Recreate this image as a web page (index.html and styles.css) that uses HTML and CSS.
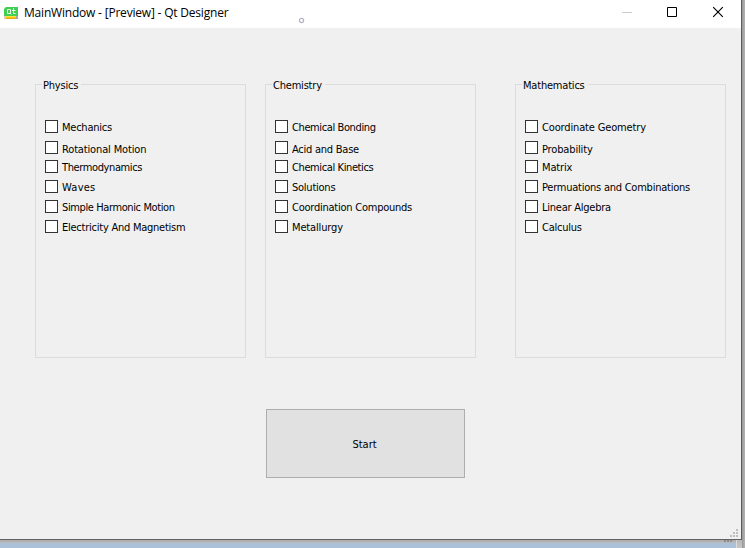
FILE: index.html
```
<!DOCTYPE html>
<html lang="en">
<head>
<meta charset="utf-8">
<title>MainWindow - [Preview] - Qt Designer</title>
<link rel="stylesheet" href="styles.css">
</head>
<body>
<div class="desktop">
  <div class="window">
    <header class="titlebar">
      <svg class="logo" width="16" height="16" viewBox="0 0 16 16">
        <path d="M3 2h12v9l-2 1H1V4z" fill="#41cd52"/>
        <path d="M1 11h2v3H1z" fill="#d8d0c0"/>
        <path d="M3 11h10v1H3z" fill="#f7e04a"/>
        <path d="M3 12h10v1H3z" fill="#f6c800"/>
        <path d="M3 13h10v1H3z" fill="#e5a914"/>
        <path d="M13 11h2v3h-2z" fill="#b0a59c"/>
        <path d="M4.5 4.5h3v4h-3zM7 8l1.5 1.5M10.5 3v5.5h2M9 5.5h3.5" fill="none" stroke="#e6fae9" stroke-width="1"/>
      </svg>
      <h1 class="title">MainWindow - [Preview] - Qt Designer</h1>
      <svg class="cursor" width="7" height="7" viewBox="0 0 7 7"><circle cx="3.5" cy="3.5" r="2.1" fill="#fff" stroke="#b4b4c8" stroke-width="1.3"/></svg>
      <svg class="controls" width="104" height="28" viewBox="0 0 104 28">
        <path d="M1 12.5h10" stroke="#ccc" fill="none"/>
        <path d="M46.5 7.5h9v9h-9z" stroke="#000" fill="none"/>
        <path d="M92.2 7.2l9.6 9.6M101.8 7.2l-9.6 9.6" stroke="#000" stroke-width="1.15" fill="none"/>
      </svg>
    </header>
    <main class="content">
      <div class="groups">
        <section class="group">
          <h2 class="legend">Physics</h2>
          <label class="option"><i class="box"></i><span>Mechanics</span></label>
          <label class="option low"><i class="box"></i><span class="loose">Rotational Motion</span></label>
          <label class="option"><i class="box"></i><span class="tight">Thermodynamics</span></label>
          <label class="option"><i class="box"></i><span class="wide">Waves</span></label>
          <label class="option"><i class="box"></i><span class="tight">Simple Harmonic Motion</span></label>
          <label class="option"><i class="box"></i><span>Electricity And Magnetism</span></label>
        </section>
        <section class="group">
          <h2 class="legend">Chemistry</h2>
          <label class="option"><i class="box"></i><span class="tight">Chemical Bonding</span></label>
          <label class="option low"><i class="box"></i><span>Acid and Base</span></label>
          <label class="option"><i class="box"></i><span class="tight">Chemical Kinetics</span></label>
          <label class="option"><i class="box"></i><span>Solutions</span></label>
          <label class="option"><i class="box"></i><span>Coordination Compounds</span></label>
          <label class="option"><i class="box"></i><span class="loose">Metallurgy</span></label>
        </section>
        <section class="group last">
          <h2 class="legend">Mathematics</h2>
          <label class="option"><i class="box"></i><span class="loose">Coordinate Geometry</span></label>
          <label class="option low"><i class="box"></i><span class="loose">Probability</span></label>
          <label class="option"><i class="box"></i><span class="loose">Matrix</span></label>
          <label class="option"><i class="box"></i><span>Permuations and Combinations</span></label>
          <label class="option"><i class="box"></i><span>Linear Algebra</span></label>
          <label class="option"><i class="box"></i><span>Calculus</span></label>
        </section>
      </div>
      <button class="start">Start</button>
    </main>
    <svg class="grip" width="8" height="8" viewBox="0 0 8 8"><path d="M6 0h2v2H6zM3 3h2v2H3zM6 3h2v2H6zM0 6h2v2H0zM3 6h2v2H3zM6 6h2v2H6z" fill="#bfbfbf"/></svg>
  </div>
  <svg class="back-grip" width="8" height="2" viewBox="0 0 8 2"><path d="M0 0h2v2H0zM3 0h2v2H3zM6 0h2v2H6z" fill="#8c8c8c"/></svg>
</div>
</body>
</html>
```
FILE: styles.css
```
* { box-sizing: border-box; }
body { margin: 0; background: #a6b9d1; }
.desktop {
  position: relative;
  width: 745px;
  height: 548px;
  overflow: hidden;
  background:
    linear-gradient(#dcdcdc, #dcdcdc) 736px 540px / 1px 8px no-repeat,
    linear-gradient(90deg, #989898, #b4b4b4) 742px 0 / 3px 548px no-repeat,
    linear-gradient(#b8b8b8, #c6c6c6) 737px 540px / 8px 8px no-repeat,
    linear-gradient(#aaa, #bdbdbd) 0 540px / 745px 3px no-repeat,
    linear-gradient(#9db2cc, #abc0d9);
}
.window {
  position: relative;
  width: 742px;
  height: 540px;
  background: #f0f0f0;
  border-right: 1px solid #5c5c5c;
  border-bottom: 1px solid #626262;
}
.titlebar {
  display: flex;
  height: 28px;
  padding-left: 3px;
  background: #fff;
}
.logo { margin-top: 5px; }
.title {
  width: 279px;
  margin: 0 0 0 5px;
  font: 400 12px/26px "Open Sans", "Noto Sans", sans-serif;
  letter-spacing: -0.2px;
  white-space: nowrap;
  color: #000;
}
.cursor { margin: 17px 0 0 -5px; }
.controls { margin-left: 316px; }
.content {
  display: flex;
  flex-direction: column;
  padding: 56px 0 0 35px;
  font: 11px/22px "DejaVu Sans Condensed", "DejaVu Sans", sans-serif;
  font-stretch: condensed;
  letter-spacing: -0.24px;
  color: #000;
}
.groups { display: flex; gap: 19px; }
.group {
  width: 211px;
  height: 274px;
  padding: 0 9px;
  border: 1px solid #dcdcdc;
}
.last { margin-left: 20px; }
.legend {
  width: max-content;
  height: 20px;
  margin: -10px 0 22px -3px;
  padding: 0 3px 0 1px;
  background: #f0f0f0;
  font: inherit;
  letter-spacing: -0.2px;
}
.option { display: flex; height: 20px; gap: 4px; white-space: nowrap; }
.low { height: 19px; margin-top: 1px; line-height: 24px; }
.tight { letter-spacing: -0.39px; }
.loose { letter-spacing: -0.15px; }
.wide { letter-spacing: 0.25px; }
.box {
  width: 13px;
  height: 13px;
  margin-top: 3px;
  border: 1px solid #333;
  background: #fff;
}
.start {
  width: 199px;
  height: 69px;
  margin: 51px 0 0 231px;
  padding: 2px 2px 0 0;
  border: 1px solid #adadad;
  background: #e1e1e1;
  font: inherit;
  color: #000;
}
.grip { position: absolute; right: 3px; bottom: 2px; }
.back-grip { position: absolute; left: 724px; top: 540px; }
```
